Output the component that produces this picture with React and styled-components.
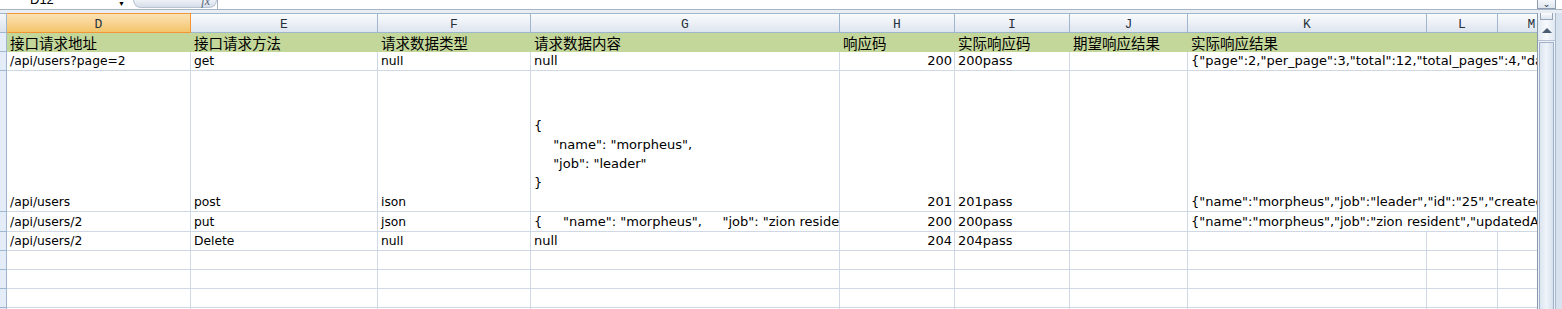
import React from "react";
import styled, { createGlobalStyle, css } from "styled-components";

const GlobalStyle = createGlobalStyle`
  html, body {
    margin: 0;
    padding: 0;
    background: #fff;
    overflow: hidden;
  }
`;

// M runs past the scrollbar, so the sheet clips it
const COLS = [
  { key: "D", w: 184 },
  { key: "E", w: 187 },
  { key: "F", w: 153 },
  { key: "G", w: 309 },
  { key: "H", w: 115 },
  { key: "I", w: 115 },
  { key: "J", w: 118 },
  { key: "K", w: 239 },
  { key: "L", w: 71 },
  { key: "M", w: 68 },
];

const GRID = "#d0d7e5";
const HEAD_LINE = "#9eb6ce";

const Window = styled.div`
  width: 1562px;
  height: 309px;
  overflow: hidden;
  display: flex;
  flex-direction: column;
  background: #fff;
`;

const FormulaBar = styled.div`
  height: 9px;
  display: flex;
  border-bottom: 1px solid #a7b4c4;
  overflow: hidden;
`;

const NameBox = styled.div`
  width: 128px;
  display: flex;
  align-items: flex-end;
  justify-content: space-between;
  padding: 0 3px 0 30px;
  box-sizing: border-box;
  font: 13px "Liberation Sans", Arial, sans-serif;
  color: #000;
  span {
    line-height: 13px;
    margin-bottom: 3px;
  }
  i {
    font-style: normal;
    font-size: 7px;
    line-height: 7px;
    margin-bottom: 2px;
  }
`;

const FxButton = styled.div`
  width: 84px;
  margin: 0 0 1px 5px;
  border: 1px solid #b7c3d2;
  border-top: none;
  border-radius: 0 0 9px 9px;
  background: linear-gradient(#eef2f7, #d6dee9);
  display: flex;
  justify-content: flex-end;
  align-items: flex-end;
  padding: 0 6px 1px 0;
  box-sizing: border-box;
  font: italic 12px "Liberation Serif", serif;
  color: #51637a;
  line-height: 9px;
`;

const FormulaInput = styled.div`
  flex: 1;
  border-left: 1px solid #a7b4c4;
  background: #fff;
`;

const ExpandButton = styled.div`
  width: 19px;
  margin-right: 6px;
  border: 1px solid #8d9cb1;
  border-top: none;
  background: linear-gradient(#f4f7fb, #dfe6ef);
  display: flex;
  justify-content: center;
  align-items: flex-end;
  box-sizing: border-box;
  font: bold 9px "DejaVu Sans", sans-serif;
  color: #3a4a5e;
  line-height: 8px;
`;

const Gap = styled.div`
  height: 3px;
  background: #e9eef5;
`;

const Body = styled.div`
  flex: 1;
  display: flex;
  min-height: 0;
`;

const Sheet = styled.div`
  width: 1537px;
  flex-shrink: 0;
  display: grid;
  grid-template-columns: 7px ${COLS.map((c) => c.w + "px").join(" ")};
  grid-template-rows: 20px 19px 19px 141px 20px 19px 19px 19px 19px 19px;
  align-content: start;
  overflow: hidden;
`;

const Corner = styled.div`
  background: linear-gradient(#f4f7fb, #dae2ec);
  border-right: 1px solid ${HEAD_LINE};
  border-bottom: 1px solid ${HEAD_LINE};
  border-top: 1px solid ${HEAD_LINE};
  box-sizing: border-box;
`;

const ColHead = styled.div`
  display: flex;
  align-items: center;
  justify-content: center;
  box-sizing: border-box;
  border-top: 1px solid ${HEAD_LINE};
  border-right: 1px solid ${HEAD_LINE};
  border-bottom: 1px solid ${HEAD_LINE};
  background: linear-gradient(#f9fbfd 0%, #eef2f7 45%, #dde4ee 100%);
  font: 13px "Liberation Mono", "Courier New", monospace;
  color: #27313d;
  padding-top: 2px;
  ${(p) =>
    p.$selected &&
    css`
      background: linear-gradient(#fbe3b4 0%, #f8d391 50%, #f3c46a 100%);
      border-right-color: #f29536;
      border-bottom-color: #f29536;
      border-top-color: #f29536;
    `}
`;

const RowHead = styled.div`
  background: #e4ecf7;
  border-right: 1px solid ${HEAD_LINE};
  border-bottom: 1px solid ${HEAD_LINE};
  box-sizing: border-box;
`;

const Cell = styled.div`
  display: flex;
  align-items: flex-end;
  justify-content: ${(p) => (p.$right ? "flex-end" : "flex-start")};
  box-sizing: border-box;
  border-right: 1px solid ${GRID};
  border-bottom: 1px solid ${GRID};
  padding: 0 2px 0 3px;
  overflow: hidden;
  white-space: pre;
  font-family: "DejaVu Sans", Verdana, sans-serif;
  font-size: ${(p) => p.$size || 13}px;
  line-height: 18px;
  color: #000;
  grid-column: span ${(p) => p.$span || 1};
`;

const HeadCell = styled.div`
  display: flex;
  align-items: flex-end;
  box-sizing: border-box;
  background: #c4d79b;
  padding: 0 0 0 3px;
  overflow: hidden;
  white-space: nowrap;
  font: 14.5px "Noto Sans CJK SC", "Liberation Sans", sans-serif;
  line-height: 18px;
  color: #000;
  grid-column: span ${(p) => p.$span || 1};
`;

const MultiLine = styled.div`
  white-space: pre;
  line-height: 19px;
`;

const VScroll = styled.div`
  width: 25px;
  display: flex;
  background: #d8e2ef;
`;

const Track = styled.div`
  width: 19px;
  display: flex;
  flex-direction: column;
  border-left: 1px solid #8899ae;
  border-right: 1px solid #a8b7ca;
  box-sizing: border-box;
  background: #eef2f8;
`;

const SplitBox = styled.div`
  height: 6px;
  margin: 0 2px;
  border: 1px solid #95a5b9;
  border-top: none;
  background: linear-gradient(#fbfcfe, #dde5ef);
`;

const UpButton = styled.div`
  height: 20px;
  display: flex;
  align-items: center;
  justify-content: center;
  border-bottom: 1px solid #b5c3d5;
  background: linear-gradient(90deg, #e3eaf3, #f7f9fc 50%, #dfe7f1);
  &::before {
    content: "";
    border-left: 5px solid transparent;
    border-right: 5px solid transparent;
    border-bottom: 5px solid #4a5b72;
  }
`;

const Thumb = styled.div`
  flex: 1;
  margin: 1px 1px 0;
  border: 1px solid #9fb1c8;
  border-bottom: none;
  background: linear-gradient(90deg, #dce5f0, #eef3f9 50%, #d6e0ec);
`;

const headers = [
  "接口请求地址",
  "接口请求方法",
  "请求数据类型",
  "请求数据内容",
  "响应码",
  "实际响应码",
  "期望响应结果",
];

// indent of the pasted JSON body in column G
const IND = "    \u2009";

const postBody = `{
${IND}"name": "morpheus",
${IND}"job": "leader"
}
 `;

const rows = [
  [
    "/api/users?page=2",
    "get",
    "null",
    "null",
    "200",
    "200pass",
    "",
    '{"page":2,"per_page":3,"total":12,"total_pages":4,"data":[{"id":4,"first_name":"Eve"}]}',
  ],
  [
    "/api/users",
    "post",
    "ison",
    postBody,
    "201",
    "201pass",
    "",
    '{"name":"morpheus","job":"leader","id":"25","createdAt":"2018-08-01T06:21:13.482Z"}',
  ],
  [
    "/api/users/2",
    "put",
    "json",
    '{     "name": "morpheus",     "job": "zion resident"}',
    "200",
    "200pass",
    "",
    '{"name":"morpheus","job":"zion resident","updatedAt":"2018-08-01T06:21:14.011Z"}',
  ],
  ["/api/users/2", "Delete", "null", "null", "204", "204pass", "", ""],
];

const DataRow = ({ cells }) => (
  <>
    <RowHead />
    {cells.slice(0, 7).map((text, i) =>
      text.includes("\n") ? (
        <Cell key={i}>
          <MultiLine>{text}</MultiLine>
        </Cell>
      ) : (
        <Cell key={i} $right={i === 4} $size={i < 3 ? 12.3 : 13}>
          {text}
        </Cell>
      )
    )}
    {cells[7] ? (
      <Cell $span={3}>{cells[7]}</Cell>
    ) : (
      <>
        <Cell />
        <Cell />
        <Cell />
      </>
    )}
  </>
);

const EmptyRow = () => (
  <>
    <RowHead />
    {COLS.map((c) => (
      <Cell key={c.key} />
    ))}
  </>
);

export default function App() {
  return (
    <Window>
      <GlobalStyle />
      <FormulaBar>
        <NameBox>
          <span>D12</span>
          <i>▼</i>
        </NameBox>
        <FxButton>fx</FxButton>
        <FormulaInput />
        <ExpandButton>⌄</ExpandButton>
      </FormulaBar>
      <Gap />
      <Body>
        <Sheet>
          <Corner />
          {COLS.map((c) => (
            <ColHead key={c.key} $selected={c.key === "D"}>
              {c.key}
            </ColHead>
          ))}

          <RowHead />
          {headers.map((t) => (
            <HeadCell key={t}>{t}</HeadCell>
          ))}
          <HeadCell $span={3}>实际响应结果</HeadCell>

          {rows.map((cells, i) => (
            <DataRow key={i} cells={cells} />
          ))}

          <EmptyRow />
          <EmptyRow />
          <EmptyRow />
          <EmptyRow />
        </Sheet>
        <VScroll>
          <Track>
            <SplitBox />
            <UpButton />
            <Thumb />
          </Track>
        </VScroll>
      </Body>
    </Window>
  );
}
